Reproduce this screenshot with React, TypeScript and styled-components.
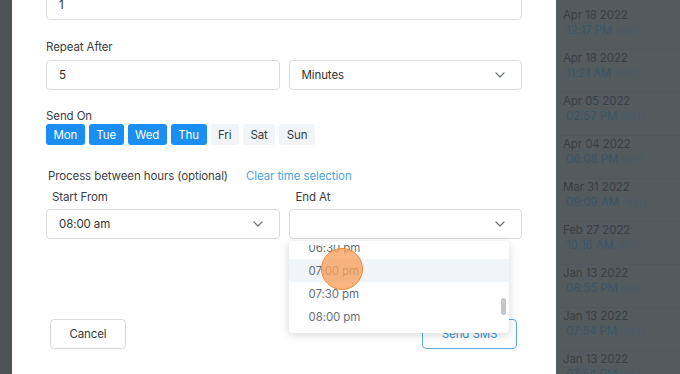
import React from "react";
import styled, { createGlobalStyle } from "styled-components";

const GlobalStyle = createGlobalStyle`
  html, body {
    margin: 0;
    padding: 0;
    width: 680px;
    height: 374px;
    overflow: hidden;
    font-family: "Inter", "Noto Sans", sans-serif;
    letter-spacing: -0.1px;
  }
  #root {
    height: 374px;
  }
  * {
    box-sizing: border-box;
  }
`;

const Page = styled.div`
  display: flex;
  width: 680px;
  height: 374px;
  overflow: hidden;
`;

const LeftShade = styled.div`
  width: 12px;
  flex: none;
  background: #4c5355;
`;

const Modal = styled.div`
  width: 544px;
  flex: none;
  background: #fff;
  padding: 0 34px;
  position: relative;
  color: #30363b;
`;

const Field = styled.div`
  height: 30px;
  border: 1px solid #d8dce0;
  border-radius: 4px;
  display: flex;
  align-items: center;
  justify-content: space-between;
  padding: 0 16px 0 12px;
  font-size: 11.5px;
  color: #333;
  position: relative;
  background: #fff;
`;

// the form is scrolled, the first input is half out of view
const TopField = styled(Field)`
  margin-top: -10px;
`;

const Label = styled.div<{ $indent?: number }>`
  font-size: 11.5px;
  line-height: 16px;
  color: #3a4045;
  padding-left: ${(p) => p.$indent || 0}px;
`;

const Section = styled.div<{ $top: number }>`
  margin-top: ${(p) => p.$top}px;
  display: flex;
  flex-direction: column;
  gap: 5px;
`;

const TwoCol = styled.div`
  display: grid;
  grid-template-columns: 1fr 1fr;
  column-gap: 9px;
`;

const Days = styled.div`
  display: flex;
  gap: 4px;
  margin-top: -5px;
`;

const Day = styled.div<{ $on?: boolean }>`
  height: 21px;
  padding: 0 7.5px;
  border-radius: 3px;
  display: flex;
  align-items: center;
  font-size: 11.5px;
  background: ${(p) => (p.$on ? "#1b8ef2" : "#f1f5f8")};
  color: ${(p) => (p.$on ? "#fff" : "#343a3f")};
`;

const HeadRow = styled.div`
  display: flex;
  align-items: center;
  gap: 18px;
  padding-left: 2px;
`;

const LinkText = styled.span`
  font-size: 11.5px;
  color: #4aa5e0;
`;

const Column = styled.div`
  display: flex;
  flex-direction: column;
  gap: 4px;
  position: relative;
`;

const Chevron = () => (
  <svg width="10" height="6" viewBox="0 0 10 6" fill="none">
    <path d="M1 1l4 4 4-4" stroke="#6b7278" strokeWidth="1.2" strokeLinecap="round" strokeLinejoin="round" />
  </svg>
);

const Dropdown = styled.div`
  position: absolute;
  top: 52px;
  left: 0;
  width: 220px;
  height: 92px;
  padding: 4px 0;
  background: #fff;
  border-radius: 4px;
  box-shadow: 0 2px 10px rgba(0, 0, 0, 0.16);
  z-index: 5;
`;

const Viewport = styled.div`
  height: 100%;
  overflow: hidden;
  position: relative;
`;

const Options = styled.div`
  margin-top: -9px;
`;

const Option = styled.div<{ $hover?: boolean }>`
  height: 23px;
  display: flex;
  align-items: center;
  padding-left: 20px;
  font-size: 11.5px;
  color: #6a7075;
  background: ${(p) => (p.$hover ? "#eff5f8" : "transparent")};
`;

const ScrollThumb = styled.div`
  position: absolute;
  right: 3px;
  top: 53px;
  width: 5px;
  height: 17px;
  border-radius: 3px;
  background: #c4c6c8;
`;

// click indicator from the screen recording
const Cursor = styled.div`
  position: absolute;
  left: 32px;
  top: 59px;
  width: 42px;
  height: 42px;
  border-radius: 50%;
  background: rgba(248, 160, 92, 0.78);
  border: 1.5px solid #f08a3c;
  z-index: 6;
`;

const Footer = styled.div`
  margin-top: 80px;
  display: flex;
  justify-content: space-between;
  padding: 0 5px 0 4px;
`;

const Button = styled.div<{ $primary?: boolean }>`
  height: 30px;
  border-radius: 4px;
  display: flex;
  align-items: center;
  justify-content: center;
  font-size: 11.5px;
  width: ${(p) => (p.$primary ? 95 : 76)}px;
  border: 1px solid ${(p) => (p.$primary ? "#5aaae0" : "#d6dadd")};
  color: ${(p) => (p.$primary ? "#3a8fd3" : "#33393e")};
  background: #fff;
`;

const SidePanel = styled.div`
  flex: 1;
  background: #545b5e;
  padding-top: 7px;
  display: flex;
  flex-direction: column;
`;

const Entry = styled.div`
  height: 43px;
  padding-left: 7px;
  border-bottom: 1px solid rgba(0, 0, 0, 0.03);
  flex: none;
`;

const EntryDate = styled.div`
  font-size: 11.5px;
  line-height: 16px;
  color: #393f42;
`;

const EntryTime = styled.div`
  font-size: 11.5px;
  line-height: 14px;
  padding-left: 3px;
  color: #3b5468;
  small {
    font-size: 8.5px;
    color: #475a6a;
    margin-left: 3px;
  }
`;

const days = [
  { name: "Mon", on: true },
  { name: "Tue", on: true },
  { name: "Wed", on: true },
  { name: "Thu", on: true },
  { name: "Fri", on: false },
  { name: "Sat", on: false },
  { name: "Sun", on: false },
];

const history = [
  ["Apr 18 2022", "12:17 PM"],
  ["Apr 18 2022", "11:21 AM"],
  ["Apr 05 2022", "02:57 PM"],
  ["Apr 04 2022", "06:08 PM"],
  ["Mar 31 2022", "09:09 AM"],
  ["Feb 27 2022", "10:16 AM"],
  ["Jan 13 2022", "08:55 PM"],
  ["Jan 13 2022", "07:54 PM"],
  ["Jan 13 2022", "07:54 PM"],
];

function App() {
  return (
    <Page>
      <GlobalStyle />
      <LeftShade />
      <Modal>
        <TopField>1</TopField>

        <Section $top={19}>
          <Label>Repeat After</Label>
          <TwoCol>
            <Field>5</Field>
            <Field>
              Minutes
              <Chevron />
            </Field>
          </TwoCol>
        </Section>

        <Section $top={18}>
          <Label>Send On</Label>
          <Days>
            {days.map((d) => (
              <Day key={d.name} $on={d.on}>
                {d.name}
              </Day>
            ))}
          </Days>
        </Section>

        <Section $top={23}>
          <HeadRow>
            <Label>Process between hours (optional)</Label>
            <LinkText>Clear time selection</LinkText>
          </HeadRow>
          <TwoCol>
            <Column>
              <Label $indent={6}>Start From</Label>
              <Field>
                08:00 am
                <Chevron />
              </Field>
            </Column>
            <Column>
              <Label $indent={7}>End At</Label>
              <Field>
                <span />
                <Chevron />
              </Field>
              <Dropdown>
                <Viewport>
                  <Options>
                    <Option>06:30 pm</Option>
                    <Option $hover>07:00 pm</Option>
                    <Option>07:30 pm</Option>
                    <Option>08:00 pm</Option>
                  </Options>
                  <ScrollThumb />
                </Viewport>
              </Dropdown>
              <Cursor />
            </Column>
          </TwoCol>
        </Section>

        <Footer>
          <Button>Cancel</Button>
          <Button $primary>Send SMS</Button>
        </Footer>
      </Modal>
      <SidePanel>
        {history.map(([date, time], i) => (
          <Entry key={i}>
            <EntryDate>{date}</EntryDate>
            <EntryTime>
              {time}
              <small>(MST)</small>
            </EntryTime>
          </Entry>
        ))}
      </SidePanel>
    </Page>
  );
}

export default App;
